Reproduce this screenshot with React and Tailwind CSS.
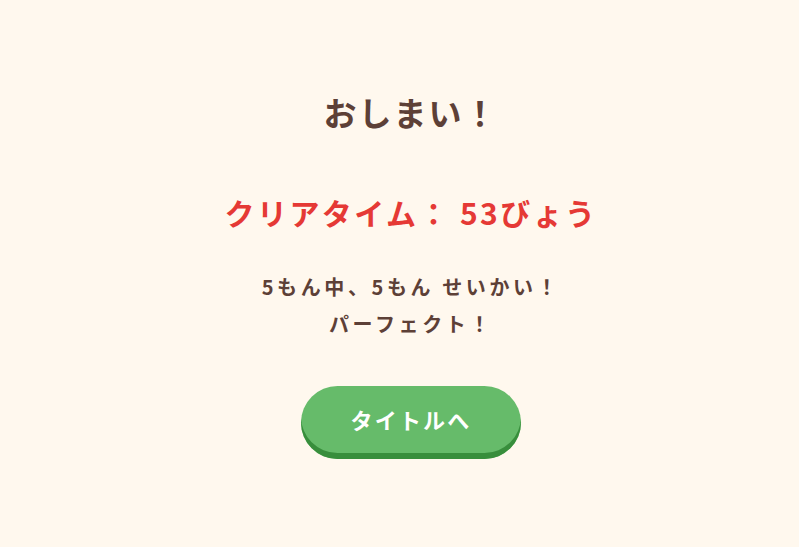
export default function App() {
  return (
    <div
      className="flex h-[547px] w-full flex-col items-center justify-center bg-[#fff8ee] pl-[23px] text-center font-bold"
      style={{ fontFamily: '"Noto Sans CJK JP", "Noto Sans", sans-serif' }}
    >
      <h1 className="text-[33px] leading-[48px] tracking-[0.06em] text-[#5d4037]">おしまい！</h1>
      <p className="mt-[54px] text-[30px] leading-[44px] tracking-[0.08em] text-[#e53935]">クリアタイム： 53びょう</p>
      <div className="mt-[34px] text-[20px] leading-[37px] tracking-[0.18em] text-[#5d4037]">
        <p>5もん中、5もん せいかい！</p>
        <p>パーフェクト！</p>
      </div>
      <button className="mt-[44px] h-[73px] w-[220px] rounded-full bg-[#66bb6a] pb-[6px] text-[22px] tracking-[0.1em] text-white shadow-[inset_0_-6px_0_#388e3c]">
        タイトルへ
      </button>
    </div>
  );
}
